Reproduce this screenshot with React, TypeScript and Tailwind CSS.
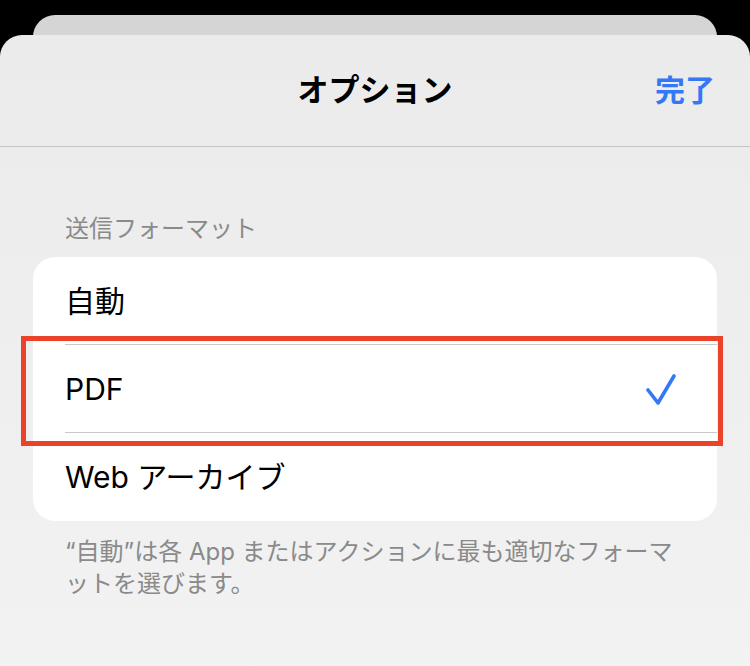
import React from "react";

const FONT = "font-['Inter','Noto_Sans_CJK_JP',sans-serif]";

export default function App() {
  const options = ["自動", "PDF", "Web アーカイブ"];
  const selected = "PDF";

  return (
    <div className={`h-[666px] w-[750px] overflow-hidden bg-black pt-[15px] ${FONT}`}>
      {/* 後ろのシート */}
      <div className="mx-[33px] h-[40px] rounded-t-[22px] bg-[#d5d5d5]" />

      {/* 前面のシート */}
      <div className="relative -mt-[20px] h-[700px] rounded-t-[22px] bg-gradient-to-b from-[#ebebeb] to-[#f3f3f3]">
        <div className="relative flex h-[112px] items-center justify-center border-b border-[#c4c4c4]">
          <h1 className="text-[31px] font-bold text-black">オプション</h1>
          <button className="absolute right-[35px] text-[30px] font-semibold text-[#3478f6]">完了</button>
        </div>

        <div className="px-[33px]">
          <p className="pt-[66px] pb-[12px] pl-[32px] text-[24px] leading-[32px] text-[#8a8a8a]">
            送信フォーマット
          </p>

          <div className="relative rounded-[22px] bg-white">
            {options.map((opt, i) => (
              <div key={opt} className="pl-[32px]">
                <div
                  className={`flex h-[88px] items-center justify-between pr-[40px] ${
                    i < options.length - 1 ? "border-b border-[#c8c8c8]" : ""
                  }`}
                >
                  <span className="text-[30px] leading-none text-black">{opt}</span>
                  {opt === selected && (
                    <svg width="32" height="32" viewBox="0 0 32 32" fill="none">
                      <path
                        d="M3 17 L13 30 L29 3"
                        stroke="#3478f6"
                        strokeWidth="3.6"
                        strokeLinecap="round"
                        strokeLinejoin="round"
                      />
                    </svg>
                  )}
                </div>
              </div>
            ))}

            {/* 赤枠の強調 */}
            <div className="absolute -left-[12px] -right-[6px] top-[79px] h-[110px] border-[5px] border-[#eb4329]" />
          </div>

          <p className="mt-[15px] pl-[32px] text-[24px] leading-[32px] text-[#8a8a8a]">
            “自動”は各 App またはアクションに最も適切なフォーマ
            <br />
            ットを選びます。
          </p>
        </div>
      </div>
    </div>
  );
}
